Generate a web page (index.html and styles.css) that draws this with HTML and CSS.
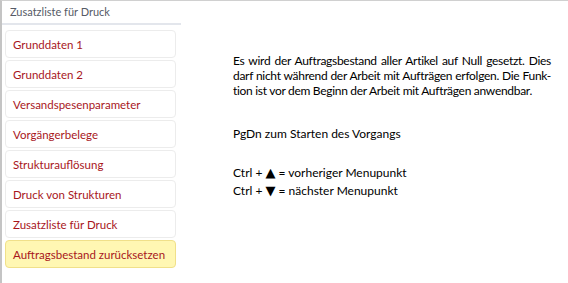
FILE: index.html
```html
<!DOCTYPE html>
<html lang="de">
  <head>
    <meta charset="UTF-8" />
    <title>Zusatzliste für Druck</title>
    <link rel="stylesheet" href="styles.css">
  </head>
  <body>
    <div class="page">
      <div class="sidebar">
        <div class="sidebar-title">Zusatzliste für Druck</div>
        <ul class="menu">
          <li class="menu-item">Grunddaten 1</li>
          <li class="menu-item">Grunddaten 2</li>
          <li class="menu-item">Versandspesenparameter</li>
          <li class="menu-item">Vorgängerbelege</li>
          <li class="menu-item">Strukturauflösung</li>
          <li class="menu-item">Druck von Strukturen</li>
          <li class="menu-item">Zusatzliste für Druck</li>
          <li class="menu-item active">Auftragsbestand zurücksetzen</li>
        </ul>
      </div>
      <div class="content">
        <p class="info">
          <span class="line">Es wird der Auftragsbestand aller Artikel auf Null gesetzt. Dies</span>
          <span class="line">darf nicht während der Arbeit mit Aufträgen erfolgen. Die Funk-</span>
          <span class="line last">tion ist vor dem Beginn der Arbeit mit Aufträgen anwendbar.</span>
        </p>
        <p class="hint">PgDn zum Starten des Vorgangs</p>
        <p class="keys">Ctrl + <span class="arrow">&#9650;</span> = vorheriger Menupunkt<br>Ctrl + <span class="arrow">&#9660;</span> = nächster Menupunkt</p>
      </div>
    </div>
  </body>
</html>
```

FILE: styles.css
```css
body {
  margin: 0;
  background: #ffffff;
  font-family: "Lato", "Noto Sans", sans-serif;
  font-size: 12px;
  color: #000000;
}

.page {
  display: flex;
  height: 283px;
  border-top: 1px solid #d0d0d0;
  border-left: 2px solid #c4c4c4;
  box-sizing: border-box;
}

/* Left menu */
.sidebar {
  width: 179px;
  flex-shrink: 0;
}

.sidebar-title {
  height: 22px;
  line-height: 21px;
  padding-left: 8px;
  font-size: 11px;
  color: #555a66;
  border-bottom: 2px solid #e3e6ec;
}

.menu {
  list-style: none;
  margin: 0;
  padding: 5px 5px 0 3px;
}

.menu-item {
  height: 28px;
  line-height: 28px;
  margin-bottom: 2px;
  padding-left: 7px;
  font-size: 11.5px;
  white-space: nowrap;
  color: #a8161c;
  background: #ffffff;
  border: 1px solid #ececec;
  border-radius: 4px;
  box-sizing: border-box;
}

.menu-item.active {
  background: #fff7b3;
  border-color: #f0e08a;
}

/* Right text */
.content {
  width: 318px;
  padding: 52px 0 0 52px;
}

.info {
  margin: 0;
  line-height: 15px;
  letter-spacing: -0.3px;
}

.line {
  display: block;
  white-space: nowrap;
  text-align: justify;
  text-align-last: justify;
}

.line.last {
  text-align-last: left;
}

.hint {
  margin: 28px 0 0;
}

.keys {
  margin: 23px 0 0;
  line-height: 18px;
}

.arrow {
  font-family: "DejaVu Sans", sans-serif;
  font-size: 13px;
}
```
